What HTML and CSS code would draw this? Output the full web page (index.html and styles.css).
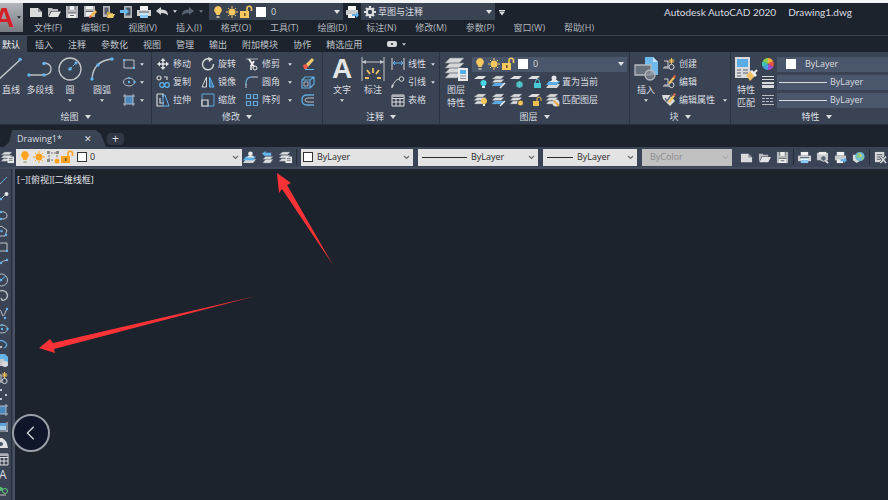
FILE: index.html
```html
<!DOCTYPE html>
<html lang="zh-CN">
<head>
<meta charset="utf-8">
<title>Autodesk AutoCAD 2020</title>
<link rel="stylesheet" href="styles.css">
</head>
<body>
<svg class="sprite" aria-hidden="true">
  <symbol id="down" viewBox="0 0 6 4"><path d="M0 0h6L3 4z" fill="currentColor"/></symbol>
  <symbol id="chev" viewBox="0 0 7 5"><path d="M1 1l2.500 2.500L6 1" fill="none" stroke="currentColor" stroke-width="1.200"/></symbol>
  <symbol id="new" viewBox="0 0 14 14"><path d="M1 3h8l4 4v5H1z" fill="#d9dadc"/><path d="M9 3v4h4z" fill="#8d9097"/></symbol>
  <symbol id="open" viewBox="0 0 14 14"><path d="M1 12V3h4l1 1h5v2H4z" fill="#b9bbbf"/><path d="M4.500 6.500H14L11 12H1.500z" fill="#e2e3e4"/></symbol>
  <symbol id="save" viewBox="0 0 14 14"><path d="M1 1h12v12H1z" fill="#b5b7ba"/><path d="M4 1h6v4H4zM3 8h8v5H3z" fill="#eceded"/><path d="M4 1v4M10 1v4M3 8h8M5 10.500h4" stroke="#5d6470"/></symbol>
  <symbol id="saveas" viewBox="0 0 14 14"><path d="M1 1h11v11H1z" fill="#b5b7ba"/><path d="M3 1h7v3H3zM3 7h7v4H3z" fill="#eceded"/><path d="M3 6.500h7" stroke="#5d6470"/><path d="M6 13l1-3 5-5 2 2-5 5z" fill="#f2b95c"/><path d="M6 13l1-3 2 2z" fill="#e15a4a"/></symbol>
  <symbol id="webopen" viewBox="0 0 14 14"><path d="M2 1h7v11H2z" fill="#b5b7ba"/><path d="M3.500 2.500h4v7h-4z" fill="#59616d"/><path d="M6 13V7h3l1 1h2v1H8z" fill="#c9a24b"/><path d="M8 9h6l-2 4H6z" fill="#f0cb6d"/></symbol>
  <symbol id="websave" viewBox="0 0 14 14"><path d="M5 1h8v12H5z" fill="#b5b7ba"/><path d="M6.500 2.500h5v8h-5z" fill="#4f5966"/><path d="M1 5h5V3l4 3.500L6 10V8H1z" fill="#69baf0"/></symbol>
  <symbol id="print" viewBox="0 0 14 14"><path d="M3 1h8v4H3z" fill="#f1f1f1"/><path d="M0 5h14v6H0z" fill="#d2d3d5"/><path d="M2 7h10" stroke="#596170"/><path d="M3 8h8v5H3z" fill="#8ac9f5"/><path d="M3 9h8" stroke="#fff"/></symbol>
  <symbol id="plot" viewBox="0 0 14 14"><path d="M3 1h8v4H3z" fill="#f1f1f1"/><path d="M1 5h12v5H1z" fill="#c9cacc"/><path d="M3 9h7v4H3z" fill="#eee"/><path d="M7 9h4V7l3 3-3 3v-2H7z" fill="#5db0ed"/></symbol>
  <symbol id="preview" viewBox="0 0 14 14"><path d="M1 2h12v8H1z" fill="#c5c7ca"/><path d="M3 1h8v3H3z" fill="#eee"/><circle cx="8" cy="8" r="3" fill="#5c6777" stroke="#dedfe1"/><path d="M10 10l3 3" stroke="#ddd" stroke-width="2"/></symbol>
  <symbol id="globe" viewBox="0 0 14 14"><path d="M1 4h7v7l-3 2-4-3z" fill="#d9dadb"/><circle cx="8.500" cy="6" r="5" fill="#67bdda"/><path d="M6 2l4 1-1 4-4 1zM11 6l2 1-3 4z" fill="#8bc77c"/><path d="M8 2l3 3-2 2z" fill="#e3cf6b"/></symbol>
  <symbol id="sheet" viewBox="0 0 14 14"><path d="M1 1h10v11H1z" fill="#d7d8da"/><path d="M3 4h6M3 6.500h4M3 9h4" stroke="#4d5665"/><path d="M7 6l6 7M13 6l-6 7" stroke="#3a4456" stroke-width="3"/><path d="M7 6l6 7M13 6l-6 7" stroke="#d9dadb" stroke-width="1.600"/></symbol>
  <symbol id="undo" viewBox="0 0 14 14"><path d="M1 6l5-4v2.500q7-.5 7 6-2-3-7-2.500v2z" fill="#d6d8da"/></symbol>
  <symbol id="redo" viewBox="0 0 14 14"><path d="M13 6L8 2v2.500Q1 4 1 10.500 3 7.500 8 8v2z" fill="#596371"/></symbol>
  <symbol id="bulb" viewBox="0 0 14 14"><path d="M7 1a4 4 0 0 0-2.500 7L5.500 10h3l1-2A4 4 0 0 0 7 1z" fill="currentColor"/><path d="M5.500 11h3v2h-3z" fill="#b7b0a0"/></symbol>
  <symbol id="sun" viewBox="0 0 14 14"><circle cx="7" cy="7" r="3.500" fill="currentColor"/><path d="M7 1v2M7 11v2M1 7h2M11 7h2M3 3l1 1M10 10l1 1M3 11l1-1M10 4l1-1" stroke="currentColor"/></symbol>
  <symbol id="lock" viewBox="0 0 14 14"><path d="M1 6h9v7H1z" fill="currentColor"/><path d="M8 6V3.500a2.200 2.200 0 0 1 4.500 0V6" fill="none" stroke="currentColor" stroke-width="1.600"/><path d="M5 8h1.500v3H5z" fill="#755321"/></symbol>
  <symbol id="vp" viewBox="0 0 14 14"><path d="M3 2v9M11 2v6M2 3h10M2 10h6" stroke="#777" stroke-dasharray="2 1"/><path d="M1 1h3v3H1zM10 1h3v3h-3zM1 9h3v3H1z" fill="#888"/><circle cx="11" cy="11" r="2.500" fill="#ffa21f"/></symbol>
  <symbol id="gear" viewBox="0 0 14 14"><path d="M7 1v12M1 7h12M3 3l8 8M11 3l-8 8" stroke="#e0e1e3" stroke-width="2.200"/><circle cx="7" cy="7" r="3.200" fill="#3a4454" stroke="#e0e1e3" stroke-width="2"/></symbol>

  <symbol id="line" viewBox="0 0 24 24"><path d="M-2 24L22 2" stroke="#c5c8cc" stroke-width="1.300"/><circle cx="21" cy="2.500" r="1.700" fill="#62b5f1"/></symbol>
  <symbol id="pline" viewBox="0 0 28 24"><path d="M3 18h16q6-1 6-6t-6-6" fill="none" stroke="#b9bdc3" stroke-width="1.400"/><g fill="#62b5f1"><circle cx="3" cy="18" r="1.700"/><circle cx="18" cy="18" r="1.700"/><circle cx="18" cy="6.500" r="1.700"/></g></symbol>
  <symbol id="circle" viewBox="0 0 24 24"><circle cx="12" cy="12" r="11" fill="none" stroke="#c3c6cb" stroke-width="1.300"/><path d="M12 12l6-6" stroke="#62b5f1" stroke-dasharray="3 1"/><circle cx="12" cy="12" r="1.800" fill="#62b5f1"/><circle cx="18" cy="6" r="1.500" fill="#62b5f1"/></symbol>
  <symbol id="arc" viewBox="0 0 24 24"><path d="M2 22Q3 4 22 2" fill="none" stroke="#c3c6cb" stroke-width="1.300"/><g fill="#62b5f1"><circle cx="2" cy="22" r="1.700"/><circle cx="8" cy="8" r="1.700"/><circle cx="22" cy="2" r="1.700"/></g></symbol>
  <symbol id="rect" viewBox="0 0 14 14"><path d="M2 3h10v8H2z" fill="none" stroke="#c0c4c9"/><path d="M1 2h2v2H1zM11 10h2v2h-2z" fill="#62b5f1"/></symbol>
  <symbol id="ellipse" viewBox="0 0 14 14"><ellipse cx="7" cy="7" rx="5.500" ry="4" fill="none" stroke="#b7bbc2"/><g fill="#62b5f1"><circle cx="7" cy="7" r="1.200"/><circle cx="12.500" cy="7" r="1.200"/><circle cx="7" cy="3" r="1"/></g></symbol>
  <symbol id="hatch" viewBox="0 0 14 14"><path d="M3 3h8v8H3z" fill="#4a87ba"/><path d="M3 1v12M11 1v12M1 3h12M1 11h12" stroke="#aebbc8"/></symbol>
  <symbol id="move" viewBox="0 0 14 14"><path d="M7 2v10M2 7h10" stroke="#e2e3e5" stroke-width="1.400"/><path d="M7 1l2.500 3h-5zM7 13l2.500-3h-5zM1 7l3-2.500v5zM13 7l-3-2.500v5z" fill="#e2e3e5"/></symbol>
  <symbol id="copy" viewBox="0 0 14 14"><g fill="none" stroke-width="1.200"><circle cx="3" cy="3" r="2" stroke="#d0d2d5"/><path d="M8 2h3v3" stroke="#d0d2d5"/><circle cx="6" cy="10" r="2.300" stroke="#62b5f1"/><circle cx="11" cy="10" r="2.300" stroke="#62b5f1"/></g></symbol>
  <symbol id="stretch" viewBox="0 0 14 14"><path d="M1 1h6v3M1 1v12h6M4 5v5h4" fill="none" stroke="#d4d6d8" stroke-width="1.200"/><path d="M7 2h2l4 11H7z" fill="none" stroke="#62b5f1"/></symbol>
  <symbol id="rotate" viewBox="0 0 14 14"><path d="M8.500 2A5.500 5.500 0 1 0 12.500 7" fill="none" stroke="#d4d6d8" stroke-width="1.400"/><path d="M7 0l5 2-4 3z" fill="#d4d6d8"/></symbol>
  <symbol id="mirror" viewBox="0 0 14 14"><path d="M5.500 2v10H1z" fill="none" stroke="#d4d6d8"/><path d="M8.500 2v10H13z" fill="#3e79a9" stroke="#62b5f1"/></symbol>
  <symbol id="scale" viewBox="0 0 14 14"><path d="M1 1h12v12H1z" fill="none" stroke="#62a9dc"/><path d="M1 7h6v6H1z" fill="#3b4453" stroke="#dfe0e2" stroke-width="1.200"/></symbol>
  <symbol id="trim" viewBox="0 0 14 14"><path d="M1 2h12" stroke="#a8adb5"/><path d="M4 2l5 8M9 4l-3 5" stroke="#eee" stroke-width="1.800"/><circle cx="10" cy="11" r="2" fill="none" stroke="#eee"/><path d="M6 8v5" stroke="#eee" stroke-width="1.500"/></symbol>
  <symbol id="fillet" viewBox="0 0 14 14"><path d="M1 10V8q0-6 6-6" fill="none" stroke="#62a9dc" stroke-width="1.300"/><path d="M7 2h6M1 9v4" stroke="#c7cace"/></symbol>
  <symbol id="array" viewBox="0 0 14 14"><g fill="none" stroke="#61a9de" stroke-width="1.200"><path d="M1.500 8.500h4v4h-4zM8.500 8.500h4v4h-4zM8.500 1.500h4v4h-4z"/><path d="M1.500 1.500h4v4h-4z"/></g></symbol>
  <symbol id="erase" viewBox="0 0 14 14"><path d="M5 7l6-6 2 2-6 7z" fill="#f2cb71"/><path d="M2 8l3-1 2 2-1 3H3z" fill="#ef5a47"/><path d="M4 12.500h9" stroke="#62b5f1"/></symbol>
  <symbol id="explode" viewBox="0 0 14 14"><path d="M1 5h8v8H1zM1 5l3-3h9v7l-4 4M9 5l4-3" fill="none" stroke="#62a9dc" stroke-width="1.200"/><path d="M3 7h4v4H3z" fill="none" stroke="#a9b4c0"/></symbol>
  <symbol id="offset" viewBox="0 0 14 14"><path d="M13 2H6q-5 0-5 5t5 5h7" fill="none" stroke="#62a9dc" stroke-width="1.400"/><path d="M13 5H7Q4 5 4 7t3 2h6" fill="none" stroke="#b9bec5"/></symbol>
  <symbol id="dim" viewBox="0 0 24 24"><path d="M1 0v24M23 0v24M1 5h22" stroke="#c3c6cb" fill="none"/><path d="M1 5l4-2v4zM23 5l-4-2v4z" fill="#c3c6cb"/><path d="M12 11v5M6 13l3 4M18 13l-3 4M4 21h4M16 21h4" stroke="#f0bf63" stroke-width="1.800"/></symbol>
  <symbol id="linear" viewBox="0 0 14 14"><path d="M1 1v12M13 1v12" stroke="#d4d6d8"/><path d="M2 6h10M4 4L2 6l2 2M10 4l2 2-2 2" fill="none" stroke="#62b5f1"/></symbol>
  <symbol id="leader" viewBox="0 0 14 14"><path d="M1 13q2-8 7-9" fill="none" stroke="#cfd1d4"/><circle cx="10.500" cy="4" r="2.300" fill="none" stroke="#cfd1d4"/><path d="M0 13l1-4 2 2z" fill="#cfd1d4"/></symbol>
  <symbol id="table" viewBox="0 0 14 14"><path d="M1 2h12v11H1zM1 5.500h12M1 9h12M5 5v8M9 5v8" fill="none" stroke="#dfe0e2"/><path d="M1 2h12v2H1z" fill="#aeb2b8"/></symbol>
  <symbol id="sheets" viewBox="0 0 24 24"><path d="M6 1h14l-5 5H1zM6 6h14l-5 5H1zM6 11h14l-5 5H1zM6 16h12l-5 5H1z" fill="#d5d6d7" stroke="#7e858e" stroke-width=".6"/><path d="M14 11h10v13H14z" fill="#e8e9ea"/><path d="M16 13h6v4h-6z" fill="#55ade9"/><path d="M16 19h6M16 21.500h6" stroke="#8b9097"/></symbol>
  <symbol id="lay" viewBox="0 0 14 14"><path d="M4 1h8L9 4H0z" fill="#dedfe0"/></symbol>
  <symbol id="stack" viewBox="0 0 14 14"><path d="M4 1h8L9 4H0zM3 4.500h9l-3 3H0zM3 8h9l-3 3H0z" fill="#d9dadb" stroke="#727a85" stroke-width=".4"/></symbol>
  <symbol id="layoff" viewBox="0 0 14 14"><use href="#lay"/><circle cx="9.500" cy="8" r="3" fill="#48d5e5"/><path d="M8 11h3v2H8z" fill="#dcecef"/></symbol>
  <symbol id="layiso" viewBox="0 0 14 14"><use href="#stack"/><path d="M3 8h9l-3 3H0z" fill="#56abe6"/><path d="M8 13l5-5" stroke="#eee" stroke-width="1.500"/></symbol>
  <symbol id="layfrz" viewBox="0 0 14 14"><use href="#lay"/><circle cx="9.500" cy="9.500" r="3.200" fill="#45b9bd"/><path d="M9.500 6v7M6.500 8l6 3M6.500 11l6-3" stroke="#6bd0cf" stroke-width=".6"/></symbol>
  <symbol id="laylock" viewBox="0 0 14 14"><use href="#lay"/><path d="M6 8h7v5H6z" fill="#48c9d3"/><path d="M7.500 8V6.500a2 2 0 0 1 4 0V8" fill="none" stroke="#48c9d3"/></symbol>
  <symbol id="laycur" viewBox="0 0 14 14"><path d="M3 9h11l-3 4H0z" fill="#d3d5d7"/><path d="M3 6h11l-3 4H0z" fill="#5aafe9"/><circle cx="8" cy="3" r="2.500" fill="#e7e8e9"/><path d="M4 7l2-2h5l1 2z" fill="#e7e8e9"/></symbol>
  <symbol id="layon" viewBox="0 0 14 14"><use href="#stack"/><circle cx="10" cy="8" r="3" fill="#f7c75b"/><path d="M9 11h2v2H9z" fill="#eee"/></symbol>
  <symbol id="laythaw" viewBox="0 0 14 14"><use href="#stack"/><circle cx="10.500" cy="10" r="3" fill="#f7c75b" stroke="#3b4453"/></symbol>
  <symbol id="layun" viewBox="0 0 14 14"><use href="#lay"/><path d="M5 8h6v5H5z" fill="#f0bd50"/><path d="M9 8V6a2 2 0 0 1 4 0v2" fill="none" stroke="#f0bd50"/></symbol>
  <symbol id="laymatch" viewBox="0 0 14 14"><use href="#stack"/><circle cx="10" cy="10" r="3.500" fill="#ddd"/><path d="M8 8l5 5" stroke="#e7ac48" stroke-width="2"/></symbol>
  <symbol id="layprev" viewBox="0 0 14 14"><path d="M5 6h8l-3 3H2zM5 9h8l-3 4H2z" fill="#dbdcdd" stroke="#747b85" stroke-width=".4"/><path d="M1 3l4-3v2h6v3H5v1z" fill="#62b5f1"/></symbol>
  <symbol id="laystate" viewBox="0 0 14 14"><use href="#stack"/><path d="M7 6h7v7H7z" fill="#e5e6e7"/><path d="M8.500 8h4M8.500 10h4" stroke="#68717e"/></symbol>
  <symbol id="insert" viewBox="0 0 24 24"><path d="M11 0h8l5 5v13H11z" fill="#70b9ed"/><path d="M19 0v5h5z" fill="#c7e3f5"/><path d="M1 8h16v10H1z" fill="#68717e" stroke="#b5b9bf" stroke-width="1.300"/><circle cx="16" cy="18" r="5" fill="#858c96" fill-opacity=".7" stroke="#b5b9bf" stroke-width="1.300"/></symbol>
  <symbol id="create" viewBox="0 0 14 14"><path d="M2 4h4v6H2M1 11h6" fill="none" stroke="#d0d2d5"/><circle cx="9.500" cy="10" r="2.600" fill="none" stroke="#d0d2d5"/><path d="M9.500 1v6M6.500 4h6M7.500 2l4 4M11.500 2l-4 4" stroke="#f2c15d"/></symbol>
  <symbol id="edit" viewBox="0 0 14 14"><path d="M2 4h4v6H2M1 11h6" fill="none" stroke="#d0d2d5"/><circle cx="9.500" cy="10" r="2.600" fill="none" stroke="#d0d2d5"/><path d="M6 8l5-6 2 1-5 6z" fill="#f2c15d"/><path d="M11 2l1-2 2 1-1 2z" fill="#e85c4c"/></symbol>
  <symbol id="attr" viewBox="0 0 14 14"><path d="M0 2h8l5 6-5 5-7-7z" fill="#d9dadc"/><path d="M3 5l2 3 5-7" fill="none" stroke="#555e6b" stroke-width="1.300"/><path d="M6 9l5-7 2 1-5 7z" fill="#f2c15d"/><path d="M11 2l1-2 2 1-1 2z" fill="#e85c4c"/></symbol>
  <symbol id="match" viewBox="0 0 24 24"><path d="M1 0h15v21H1z" fill="#d9dadb"/><path d="M3 2h11v8H3z" fill="#59ace5"/><path d="M3 13h4M9 13h5M3 16h4M9 16h5M3 19h4" stroke="#59616e"/><path d="M12 18l5-4 4 5-5 5z" fill="#f0c36a"/><path d="M16 14l2-1 5 5-2 2z" fill="#f2f2f2"/><path d="M20 16l3-3" stroke="#eee" stroke-width="2"/></symbol>
  <symbol id="wheel" viewBox="0 0 14 14"><path d="M7 7V1a6 6 0 0 1 5.200 3z" fill="#f2ad3c"/><path d="M7 7l5.200-3a6 6 0 0 1 0 6z" fill="#e9563f"/><path d="M7 7l5.200 3A6 6 0 0 1 7 13z" fill="#a64bd0"/><path d="M7 7v6a6 6 0 0 1-5.200-3z" fill="#459ee7"/><path d="M7 7l-5.200 3a6 6 0 0 1 0-6z" fill="#3ec7b6"/><path d="M7 7L1.800 4A6 6 0 0 1 7 1z" fill="#8fcc50"/></symbol>
  <symbol id="weight" viewBox="0 0 14 14"><path d="M1 1.500h12M1 4.500h12" stroke="#d9dadc"/><path d="M1 8h12" stroke="#d9dadc" stroke-width="2"/><path d="M1 11.500h12" stroke="#d9dadc" stroke-width="3"/></symbol>
  <symbol id="ltype" viewBox="0 0 14 14"><path d="M1 2.500h12M1 11.500h12" stroke="#b9bdc2"/><path d="M1 5.500h12M1 8.500h12" stroke="#b9bdc2" stroke-dasharray="3 1"/></symbol>
  <symbol id="sline" viewBox="0 0 14 14"><path d="M0 14L12 2" stroke="#62a9dc"/><path d="M0 14l6-6" stroke="#aeb3ba"/></symbol>
  <symbol id="sray" viewBox="0 0 14 14"><path d="M0 14L12 2" stroke="#b9bdc3"/><circle cx="11.500" cy="3" r="2" fill="#e3e4e5"/><circle cx="6" cy="8" r="1.300" fill="#62b5f1"/></symbol>
  <symbol id="spl" viewBox="0 0 14 14"><path d="M1 11h8q4-1 3-4-1-4-6-3" fill="none" stroke="#b9bdc3"/><circle cx="6" cy="4" r="1.200" fill="#62b5f1"/><circle cx="6" cy="11" r="1.200" fill="#62b5f1"/></symbol>
  <symbol id="spoly" viewBox="0 0 14 14"><path d="M6 2l6 4-2 6H3L1 6z" fill="none" stroke="#b9bdc3"/><circle cx="6.500" cy="7" r="1.200" fill="#62b5f1"/><circle cx="11" cy="11" r="1.200" fill="#62b5f1"/></symbol>
  <symbol id="sarc" viewBox="0 0 14 14"><path d="M1 13Q3 4 13 3" fill="none" stroke="#b9bdc3"/><circle cx="6" cy="6" r="1.200" fill="#62b5f1"/><circle cx="12" cy="3" r="1.200" fill="#62b5f1"/></symbol>
  <symbol id="scirc" viewBox="0 0 14 14"><circle cx="6.500" cy="7" r="6" fill="none" stroke="#b9bdc3"/><path d="M6 7l5-4" stroke="#62b5f1"/><circle cx="6" cy="7" r="1.300" fill="#62b5f1"/></symbol>
  <symbol id="cloud" viewBox="0 0 14 14"><path d="M3 3q4-3 8 0 3 4 0 7-4 3-5-1" fill="none" stroke="#b9bdc3" stroke-width="1.300"/></symbol>
  <symbol id="spline" viewBox="0 0 14 14"><path d="M1 3q5-1 6 5t5-6" fill="none" stroke="#b9bdc3"/><circle cx="12" cy="3" r="1.200" fill="#62b5f1"/><circle cx="10" cy="12" r="1.200" fill="#62b5f1"/></symbol>
  <symbol id="earc" viewBox="0 0 14 14"><path d="M1 5q5-5 10 0 2 3-2 5" fill="none" stroke="#62a9dc" stroke-width="1.300"/><circle cx="6" cy="9" r="1.200" fill="#bbb"/></symbol>
  <symbol id="sins" viewBox="0 0 14 14"><path d="M3 0h7l3 3v9H3z" fill="#67b4eb"/><path d="M0 5h9v7H0z" fill="#c3c7cb"/><circle cx="10" cy="10" r="3" fill="#d9dadc"/></symbol>
  <symbol id="points" viewBox="0 0 14 14"><path d="M5 2h2v2H5zM10 7h2v2h-2zM5 11h2v2H5z" fill="#b9cbd8"/></symbol>
  <symbol id="grad" viewBox="0 0 14 14"><path d="M2 3h9v7H2z" fill="#5aa5de"/><path d="M2 6h9v4H2z" fill="#a4cbe8"/><path d="M2 2v10M12 2v10M1 11h12" stroke="#c5cbd1"/></symbol>
  <symbol id="region" viewBox="0 0 14 14"><path d="M1 2h6q5 2 6 10H1z" fill="#e1e2e3"/><circle cx="6" cy="8" r="2" fill="#495363"/></symbol>
  <symbol id="addsel" viewBox="0 0 14 14"><path d="M6 2v4M4 4h4" stroke="#57c574" stroke-width="1.600"/><circle cx="10" cy="6" r="2.500" fill="none" stroke="#63c97e"/><path d="M2 10h9" stroke="#bbb"/></symbol>
</svg>

<div class="app">
  <header class="top">
    <button class="logo" aria-label="应用程序菜单"><b>A</b><svg class="dn"><use href="#down"/></svg></button>
    <div class="bars">
      <div class="titlebar">
        <div class="qat">
          <button aria-label="新建"><svg class="ic"><use href="#new"/></svg></button>
          <button aria-label="打开"><svg class="ic"><use href="#open"/></svg></button>
          <button aria-label="保存"><svg class="ic"><use href="#save"/></svg></button>
          <button aria-label="另存为"><svg class="ic"><use href="#saveas"/></svg></button>
          <button aria-label="从云打开"><svg class="ic"><use href="#webopen"/></svg></button>
          <button aria-label="保存到云"><svg class="ic"><use href="#websave"/></svg></button>
          <button aria-label="打印"><svg class="ic"><use href="#print"/></svg></button>
          <button aria-label="放弃"><svg class="ic"><use href="#undo"/></svg><svg class="dn"><use href="#down"/></svg></button>
          <button aria-label="重做"><svg class="ic"><use href="#redo"/></svg><svg class="dn dim"><use href="#down"/></svg></button>
        </div>
        <div class="combo quick layer">
          <svg class="ic"><use href="#bulb"/></svg><svg class="ic"><use href="#sun"/></svg><svg class="ic"><use href="#lock"/></svg><i class="swatch"></i>
          <select aria-label="快速图层"><option>0</option></select><svg class="dn"><use href="#down"/></svg>
        </div>
        <button class="plot" aria-label="批处理打印"><svg class="ic"><use href="#plot"/></svg></button>
        <div class="combo quick space">
          <svg class="ic"><use href="#gear"/></svg>
          <select aria-label="工作空间"><option>草图与注释</option></select><svg class="dn"><use href="#down"/></svg>
        </div>
        <button class="more" aria-label="自定义"><svg class="dn"><use href="#down"/></svg></button>
        <h1><span>Autodesk AutoCAD 2020</span><span>Drawing1.dwg</span></h1>
      </div>
      <nav class="menu">
        <a href="#">文件(F)</a><a href="#">编辑(E)</a><a href="#">视图(V)</a><a href="#">插入(I)</a><a href="#">格式(O)</a><a href="#">工具(T)</a><a href="#">绘图(D)</a><a href="#">标注(N)</a><a href="#">修改(M)</a><a href="#">参数(P)</a><a href="#">窗口(W)</a><a href="#">帮助(H)</a>
      </nav>
    </div>
  </header>

  <nav class="tabs">
    <a class="on" href="#">默认</a><a href="#">插入</a><a href="#">注释</a><a href="#">参数化</a><a href="#">视图</a><a href="#">管理</a><a href="#">输出</a><a href="#">附加模块</a><a href="#">协作</a><a href="#">精选应用</a>
    <button aria-label="最小化功能区"><i class="pill"></i><svg class="dn"><use href="#down"/></svg></button>
  </nav>

  <div class="ribbon">
    <section class="panel draw">
      <div class="body">
        <button class="big"><svg class="bi"><use href="#line"/></svg><span>直线</span></button>
        <button class="big"><svg class="bi wide"><use href="#pline"/></svg><span>多段线</span></button>
        <button class="big"><svg class="bi"><use href="#circle"/></svg><span>圆</span><svg class="dn"><use href="#down"/></svg></button>
        <button class="big"><svg class="bi"><use href="#arc"/></svg><span>圆弧</span><svg class="dn"><use href="#down"/></svg></button>
        <div class="col">
          <button aria-label="矩形"><svg class="ic"><use href="#rect"/></svg><svg class="dn"><use href="#down"/></svg></button>
          <button aria-label="椭圆"><svg class="ic"><use href="#ellipse"/></svg><svg class="dn"><use href="#down"/></svg></button>
          <button aria-label="图案填充"><svg class="ic"><use href="#hatch"/></svg><svg class="dn"><use href="#down"/></svg></button>
        </div>
      </div>
      <h2>绘图<svg class="dn"><use href="#down"/></svg></h2>
    </section>
    <section class="panel modify">
      <div class="body">
        <div class="col">
          <button><svg class="ic"><use href="#move"/></svg>移动</button>
          <button><svg class="ic"><use href="#copy"/></svg>复制</button>
          <button><svg class="ic"><use href="#stretch"/></svg>拉伸</button>
        </div>
        <div class="col">
          <button><svg class="ic"><use href="#rotate"/></svg>旋转</button>
          <button><svg class="ic"><use href="#mirror"/></svg>镜像</button>
          <button><svg class="ic"><use href="#scale"/></svg>缩放</button>
        </div>
        <div class="col">
          <button><svg class="ic"><use href="#trim"/></svg>修剪<svg class="dn"><use href="#down"/></svg></button>
          <button><svg class="ic"><use href="#fillet"/></svg>圆角<svg class="dn"><use href="#down"/></svg></button>
          <button><svg class="ic"><use href="#array"/></svg>阵列<svg class="dn"><use href="#down"/></svg></button>
        </div>
        <div class="col">
          <button aria-label="删除"><svg class="ic"><use href="#erase"/></svg></button>
          <button aria-label="分解"><svg class="ic"><use href="#explode"/></svg></button>
          <button aria-label="偏移"><svg class="ic"><use href="#offset"/></svg></button>
        </div>
      </div>
      <h2>修改<svg class="dn"><use href="#down"/></svg></h2>
    </section>
    <section class="panel note">
      <div class="body">
        <button class="big"><b class="glyph">A</b><span>文字</span><svg class="dn"><use href="#down"/></svg></button>
        <button class="big"><svg class="bi"><use href="#dim"/></svg><span>标注</span></button>
        <div class="col">
          <button><svg class="ic"><use href="#linear"/></svg>线性<svg class="dn"><use href="#down"/></svg></button>
          <button><svg class="ic"><use href="#leader"/></svg>引线<svg class="dn"><use href="#down"/></svg></button>
          <button><svg class="ic"><use href="#table"/></svg>表格</button>
        </div>
      </div>
      <h2>注释<svg class="dn"><use href="#down"/></svg></h2>
    </section>
    <section class="panel layers">
      <div class="body">
        <button class="big"><svg class="bi"><use href="#sheets"/></svg><span>图层<br>特性</span></button>
        <div class="col">
          <div class="combo blue layer">
            <svg class="ic"><use href="#bulb"/></svg><svg class="ic"><use href="#sun"/></svg><svg class="ic"><use href="#lock"/></svg><i class="swatch"></i>
            <select aria-label="图层"><option>0</option></select><svg class="dn"><use href="#down"/></svg>
          </div>
          <div class="tools">
            <button aria-label="关"><svg class="ic"><use href="#layoff"/></svg></button>
            <button aria-label="隔离"><svg class="ic"><use href="#layiso"/></svg></button>
            <button aria-label="冻结"><svg class="ic"><use href="#layfrz"/></svg></button>
            <button aria-label="锁定"><svg class="ic"><use href="#laylock"/></svg></button>
            <button><svg class="ic"><use href="#laycur"/></svg>置为当前</button>
          </div>
          <div class="tools">
            <button aria-label="打开所有图层"><svg class="ic"><use href="#layon"/></svg></button>
            <button aria-label="取消隔离"><svg class="ic"><use href="#layiso"/></svg></button>
            <button aria-label="解冻"><svg class="ic"><use href="#laythaw"/></svg></button>
            <button aria-label="解锁"><svg class="ic"><use href="#layun"/></svg></button>
            <button><svg class="ic"><use href="#laymatch"/></svg>匹配图层</button>
          </div>
        </div>
      </div>
      <h2>图层<svg class="dn"><use href="#down"/></svg></h2>
    </section>
    <section class="panel block">
      <div class="body">
        <button class="big"><svg class="bi"><use href="#insert"/></svg><span>插入</span><svg class="dn"><use href="#down"/></svg></button>
        <div class="col">
          <button><svg class="ic"><use href="#create"/></svg>创建</button>
          <button><svg class="ic"><use href="#edit"/></svg>编辑</button>
          <button><svg class="ic"><use href="#attr"/></svg>编辑属性<svg class="dn"><use href="#down"/></svg></button>
        </div>
      </div>
      <h2>块<svg class="dn"><use href="#down"/></svg></h2>
    </section>
    <section class="panel props">
      <div class="body">
        <button class="big"><svg class="bi"><use href="#match"/></svg><span>特性<br>匹配</span></button>
        <div class="col">
          <div class="prop"><svg class="ic"><use href="#wheel"/></svg><div class="combo blue color"><i class="swatch"></i><select aria-label="对象颜色"><option>ByLayer</option></select></div></div>
          <div class="prop"><svg class="ic"><use href="#weight"/></svg><div class="combo blue"><i class="rule"></i><select aria-label="线宽"><option>ByLayer</option></select></div></div>
          <div class="prop"><svg class="ic"><use href="#ltype"/></svg><div class="combo blue"><i class="rule"></i><select aria-label="线型"><option>ByLayer</option></select></div></div>
        </div>
      </div>
      <h2>特性<svg class="dn"><use href="#down"/></svg></h2>
    </section>
  </div>

  <div class="files">
    <div class="file"><span>Drawing1*</span><button aria-label="关闭">✕</button></div>
    <button class="add" aria-label="新图形">+</button>
  </div>

  <div class="toolbar">
    <button aria-label="图层特性管理器"><svg class="ic"><use href="#laystate"/></svg></button>
    <div class="combo light layer vivid">
      <svg class="ic"><use href="#bulb"/></svg><svg class="ic"><use href="#sun"/></svg><svg class="ic"><use href="#vp"/></svg><svg class="ic"><use href="#lock"/></svg><i class="swatch"></i>
      <select aria-label="图层控制"><option>0</option></select><svg class="chev"><use href="#chev"/></svg>
    </div>
    <div class="group">
      <button aria-label="将对象的图层置为当前"><svg class="ic"><use href="#laycur"/></svg></button>
      <button aria-label="上一个图层"><svg class="ic"><use href="#layprev"/></svg></button>
      <button aria-label="图层状态管理器"><svg class="ic"><use href="#laystate"/></svg></button>
    </div>
    <i class="sep"></i>
    <div class="combo light c1"><i class="swatch"></i><select aria-label="颜色控制"><option>ByLayer</option></select><svg class="chev"><use href="#chev"/></svg></div>
    <div class="combo light c2"><i class="rule"></i><select aria-label="线型控制"><option>ByLayer</option></select><svg class="chev"><use href="#chev"/></svg></div>
    <div class="combo light c3"><i class="rule"></i><select aria-label="线宽控制"><option>ByLayer</option></select><svg class="chev"><use href="#chev"/></svg></div>
    <div class="combo light c4"><select aria-label="打印样式控制" disabled><option>ByColor</option></select><svg class="chev"><use href="#chev"/></svg></div>
    <div class="group std">
      <button aria-label="新建"><svg class="ic"><use href="#new"/></svg></button>
      <button aria-label="打开"><svg class="ic"><use href="#open"/></svg></button>
      <button aria-label="保存"><svg class="ic"><use href="#save"/></svg></button>
    </div>
    <i class="sep"></i>
    <div class="group">
      <button aria-label="打印"><svg class="ic"><use href="#print"/></svg></button>
      <button aria-label="打印预览"><svg class="ic"><use href="#preview"/></svg></button>
      <button aria-label="发布"><svg class="ic"><use href="#plot"/></svg></button>
      <button aria-label="三维打印"><svg class="ic"><use href="#globe"/></svg></button>
    </div>
    <i class="sep"></i>
    <button aria-label="剪切"><svg class="ic"><use href="#sheet"/></svg></button>
  </div>

  <main class="work">
    <aside class="palette">
      <div class="stackbar">
        <button aria-label="直线"><svg class="ic"><use href="#sline"/></svg></button>
        <button aria-label="构造线"><svg class="ic"><use href="#sray"/></svg></button>
        <button aria-label="多段线"><svg class="ic"><use href="#spl"/></svg></button>
        <button aria-label="多边形"><svg class="ic"><use href="#spoly"/></svg></button>
        <button aria-label="矩形"><svg class="ic"><use href="#rect"/></svg></button>
        <button aria-label="圆弧"><svg class="ic"><use href="#sarc"/></svg></button>
        <button aria-label="圆"><svg class="ic"><use href="#scirc"/></svg></button>
        <button aria-label="修订云线"><svg class="ic"><use href="#cloud"/></svg></button>
        <button aria-label="样条曲线"><svg class="ic"><use href="#spline"/></svg></button>
        <button aria-label="椭圆"><svg class="ic"><use href="#ellipse"/></svg></button>
        <button aria-label="椭圆弧"><svg class="ic"><use href="#earc"/></svg></button>
        <button aria-label="插入块"><svg class="ic"><use href="#sins"/></svg></button>
        <button aria-label="创建块"><svg class="ic"><use href="#create"/></svg></button>
        <button aria-label="点"><svg class="ic"><use href="#points"/></svg></button>
        <button aria-label="图案填充"><svg class="ic"><use href="#hatch"/></svg></button>
        <button aria-label="渐变色"><svg class="ic"><use href="#grad"/></svg></button>
        <button aria-label="面域"><svg class="ic"><use href="#region"/></svg></button>
        <button aria-label="表格"><svg class="ic"><use href="#table"/></svg></button>
        <button class="letter">A</button>
        <button aria-label="添加选定对象"><svg class="ic"><use href="#addsel"/></svg></button>
      </div>
    </aside>
    <div class="canvas"><p>[−][俯视][二维线框]</p></div>
    <svg class="arrows" viewBox="0 0 340 190" aria-hidden="true">
      <path d="M277 4l14 10-4 2 46 80-51-76-3 4z" fill="#fb3236"/>
      <path d="M39 179l11-9 3 4 203-47-202 53 1 4z" fill="#fb3236"/>
    </svg>
    <button class="prev" aria-label="上一张"><svg viewBox="0 0 38 38"><path d="M22 12l-7 7 7 7" fill="none" stroke="#d2d4d8" stroke-width="1.500"/></svg></button>
  </main>
</div>
</body>
</html>
```
FILE: styles.css
```css
* { box-sizing: border-box; }
body {
  margin: 0;
  background: #1c232d;
  color: #d9dce0;
  font: 9px/12px "Open Sans", "Noto Sans CJK SC", sans-serif;
}
button, select { font: inherit; color: inherit; background: none; border: 0; padding: 0; margin: 0; }
button { display: flex; align-items: center; white-space: nowrap; }
select { appearance: none; flex: 1; min-width: 0; height: 14px; }
a { color: inherit; text-decoration: none; white-space: nowrap; }
h1, h2, p { margin: 0; font: inherit; }
svg { display: block; flex: none; }
.sprite { position: absolute; width: 0; height: 0; }
.ic { width: 14px; height: 14px; }
.dn { width: 4px; height: 3px; }
.dim { opacity: .5; }
.chev { width: 7px; height: 5px; color: #6c6c6c; }

.app { display: flex; flex-direction: column; height: 100vh; border-top: 3px solid #f3f4f5; overflow: hidden; }

.top { display: flex; flex: none; height: 33px; border-bottom: 1px solid #394250; }
.logo {
  width: 23px;
  height: 29px;
  justify-content: space-between;
  padding-right: 2px;
  overflow: hidden;
  background: linear-gradient(#b3b6ba, #777b82);
}
.logo b { font: bold 28px/28px "Liberation Sans", sans-serif; color: #d51f26; margin-left: -6px; }
.logo .dn { color: #1c232d; }
.bars { flex: 1; min-width: 0; }
.titlebar { display: flex; height: 17px; align-items: center; }
.qat { display: flex; gap: 4px; margin-left: 6px; width: 180px; }
.qat button { gap: 4px; }
.combo { display: flex; align-items: center; }
.quick { height: 17px; background: #394352; padding: 0 3px 0 2px; }
.layer { color: #f6c960; }
.layer select { color: #d4d7dc; padding-left: 5px; }
.combo .dn { color: #e0e2e5; width: 6px; height: 4px; }
.quick.layer { width: 134px; }
.swatch { flex: none; width: 10px; height: 10px; background: #fff; }
.layer .swatch { margin-left: 3px; }
.plot { padding: 0 2px; }
.space { width: 134px; }
.space select { padding-left: 1px; }
.more { margin-left: 4px; padding-top: 2px; }
.more .dn { width: 6px; height: 6px; border-top: 1px solid #e0e2e5; }
h1 { display: flex; gap: 12px; margin-left: 159px; font-family: Lato, sans-serif; font-size: 10px; white-space: nowrap; }
.menu { display: flex; gap: 19px; padding: 2px 0 0 11px; color: #b2b6bd; }

.tabs { display: flex; flex: none; height: 16px; gap: 15px; line-height: 17px; color: #bfc3c9; }
.tabs .on { background: #3a4453; color: #f0f1f3; padding: 0 7px 0 2px; margin-right: -7px; }
.tabs button { gap: 5px; margin-left: 10px; }
.pill { width: 10px; height: 6px; border-radius: 2px; background: #d7d9dc; border: 2px solid #d7d9dc; }
.pill::after { content: ""; display: block; width: 2px; height: 2px; margin: 0 auto; background: #444d5a; }

.ribbon { display: flex; flex: none; height: 73px; background: #3a4353; border-bottom: 1px solid #272f3b; }
.panel { display: flex; flex-direction: column; flex: none; border-right: 1px solid #2a323f; padding-top: 3px; overflow: hidden; }
.body { display: grid; height: 54px; }
h2 { display: flex; align-items: center; justify-content: center; gap: 6px; height: 16px; }
h2 .dn { width: 6px; height: 4px; }
.big { flex-direction: column; padding-top: 2px; gap: 2px; min-width: 0; line-height: 13px; }
.big .dn { margin-top: 1px; }
.bi { width: 24px; height: 24px; }
.wide { width: 28px; }
.glyph { font: bold 28px/24px "Liberation Sans", sans-serif; color: #e2e4e6; height: 24px; }
.col { display: grid; grid-template-rows: repeat(3, 18px); align-items: center; min-width: 0; }
.col button { gap: 3px; }
.col button .dn { margin-left: 5px; }

.draw { width: 152px; }
.draw .body { grid-template-columns: 22px 36px 24px 40px 1fr; }
.draw .col button .dn { margin-left: 1px; }
.modify { width: 171px; }
.modify .body { grid-template-columns: 45px 44px 56px 1fr; padding-left: 4px; }
.note { width: 117px; }
.note .body { grid-template-columns: 26px 36px 1fr; padding-left: 6px; }
.note .col button .dn { margin-left: 2px; }
.layers { width: 190px; }
.layers .body { grid-template-columns: 32px 1fr; padding-right: 2px; }
.tools { display: flex; gap: 4px; padding-left: 2px; }
.tools button { gap: 2px; }
.blue { background: #4a566b; height: 15px; }
.layers .blue { padding: 0 3px 0 1px; }
.block { width: 101px; }
.block .body { grid-template-columns: 32px 1fr; }
.props { flex: 1; border-right: 0; }
.props .body { grid-template-columns: 30px 1fr; }
.props h2 { padding-left: 14px; }
.prop { display: flex; gap: 2px; align-items: center; }
.prop .combo { flex: 1; padding-left: 2px; gap: 3px; }
.prop .color { padding-left: 9px; gap: 9px; }
.rule { flex: none; width: 48px; height: 1px; background: currentColor; }

.files { display: flex; flex: none; height: 22px; padding: 5px 0 0 4px; align-items: center; }
.file {
  display: flex;
  align-items: center;
  justify-content: space-between;
  width: 102px;
  height: 17px;
  padding: 0 14px 0 13px;
  background: #3a4453;
  clip-path: polygon(0 100%, 5% 70%, 8% 0, 90% 0, 95% 25%, 100% 100%);
}
.add { justify-content: center; width: 17px; height: 12px; background: #303846; border-radius: 4px; margin-left: 1px; font-size: 12px; }

.toolbar { display: flex; flex: none; align-items: center; height: 22px; background: #3a4456; border-bottom: 2px solid #434d5e; padding-left: 1px; }
.toolbar > * { flex: none; }
.toolbar > button .ic, .group .ic { width: 13px; height: 13px; }
.light { height: 17px; background: #e3e3e3; color: #2b2b2b; margin-right: 5px; padding: 0 3px 0 2px; }
.light select { color: #2b2b2b; }
.light .swatch { border: 1px solid #333; }
.vivid { width: 226px; margin: 0 1px 0 2px; color: #ffa21f; }
.vivid select { padding-left: 3px; }
.group { display: flex; gap: 5px; }
.sep { width: 1px; height: 16px; margin: 0 4px; background: #252d39; }
.c1 { width: 112px; gap: 4px; }
.c2 { width: 120px; gap: 4px; padding-left: 4px; }
.c2 .rule { width: 45px; }
.c3 { width: 94px; gap: 4px; padding-left: 4px; }
.c3 .rule { width: 26px; }
.c4 { width: 90px; background: #c1c1c1; padding-left: 8px; }
.c4 select { color: #8b8b8b; opacity: 1; }
.c4 .chev { color: #aaa; }
.std { margin-left: 3px; }

.work { position: relative; display: flex; flex: 1; min-height: 0; overflow: hidden; }
.palette { width: 15px; background: #3a4455; border-right: 2px solid #465062; }
.stackbar { display: flex; flex-direction: column; height: 100%; padding-top: 5px; border-right: 1px solid #262e3a; width: 12px; }
.stackbar button { flex: 1 0 0; min-height: 0; margin-left: -5px; }
.stackbar .letter { font-size: 12px; margin-left: -1px; }
.canvas { flex: 1; padding: 5px 2px; color: #e2e4e7; }
.arrows { position: absolute; left: 0; top: 0; width: 340px; height: 190px; }
.prev { position: absolute; left: 12px; bottom: 48px; width: 38px; height: 38px; border-radius: 50%; border: 2px solid #9a9fa7; background: #10162a; }
.prev svg { width: 34px; height: 34px; }
```
